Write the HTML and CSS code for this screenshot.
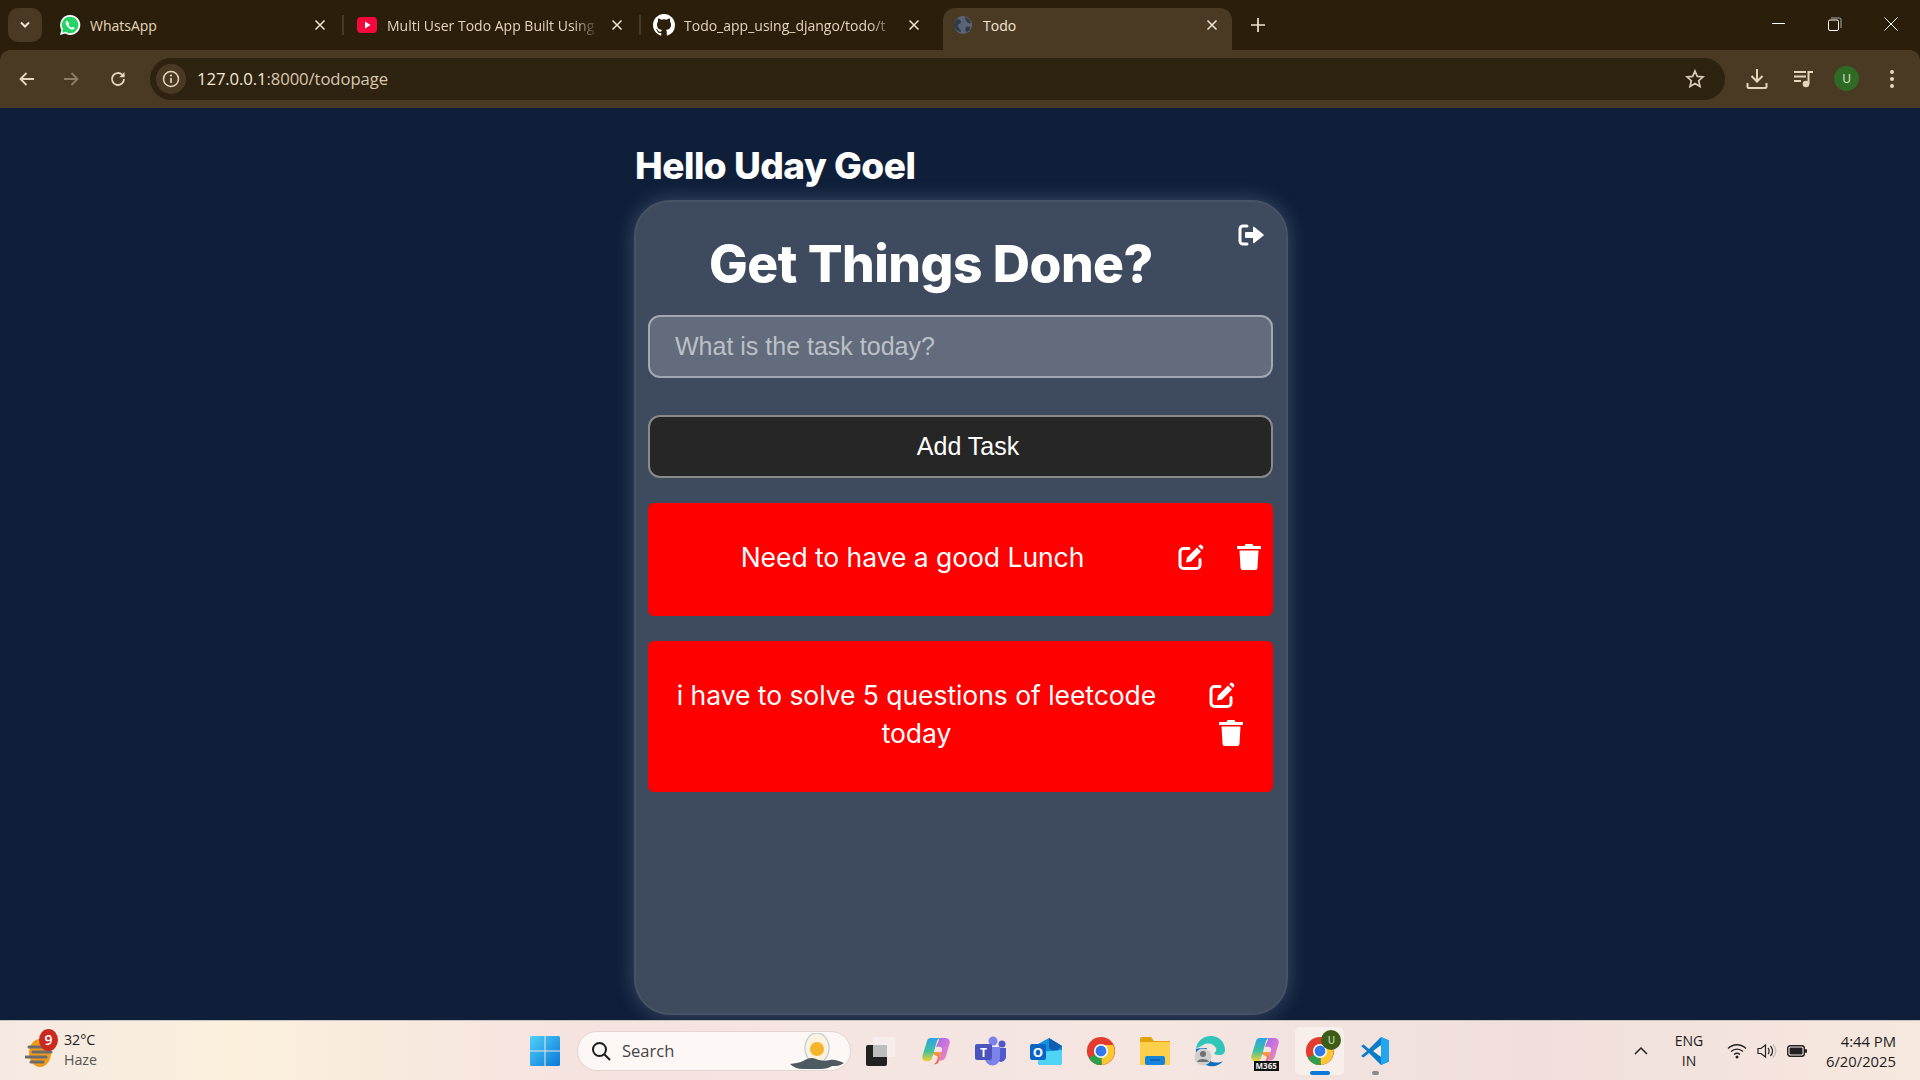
FILE: index.html
```html
<!DOCTYPE html>
<html lang="en">
<head>
  <meta charset="UTF-8">
  <meta name="viewport" content="width=device-width, initial-scale=1.0">
  <title>Todo</title>
  <link rel="stylesheet" href="styles.css">
</head>
<body>
  <svg class="defs" width="0" height="0">
    <symbol id="close" viewBox="0 0 12 12"><path d="M1.5 1.5l9 9M10.5 1.5l-9 9" stroke="currentColor" stroke-width="1.5" fill="none"/></symbol>
    <symbol id="edit" viewBox="0 0 26 26">
      <path d="M11 4.500H5.500A3.500 3.500 0 0 0 2 8v13a3.500 3.500 0 0 0 3.500 3.500h13A3.500 3.500 0 0 0 22 21v-5.500" fill="none" stroke="#fff" stroke-width="3" stroke-linecap="round"/>
      <path d="M9 13.500L19 3.500l4 4L13 17.500l-5 1z" fill="#fff"/>
      <path d="M20.300 2.200l1-1a1.800 1.800 0 0 1 2.500 0l1 1a1.800 1.800 0 0 1 0 2.500l-1 1z" fill="#fff"/>
    </symbol>
    <symbol id="trash" viewBox="0 0 24 26">
      <path d="M8.500 0h7l1 2H23a1 1 0 0 1 0 3H1a1 1 0 0 1 0-3h6.500z" fill="#fff"/>
      <path d="M2.500 6.500h19l-1 17a2.500 2.500 0 0 1-2.500 2.500H6a2.500 2.500 0 0 1-2.500-2.500z" fill="#fff"/>
    </symbol>
    <symbol id="chrome" viewBox="0 0 32 32">
      <circle cx="16" cy="16" r="15" fill="#e33b2e"/>
      <path d="M16 16l-13 7.500A15 15 0 0 0 17 31z" fill="#2f9e4c"/>
      <path d="M16 9.500h13A15 15 0 0 1 17 31z" fill="#fbc82e"/>
      <circle cx="16" cy="16" r="7.500" fill="#fff"/>
      <circle cx="16" cy="16" r="5.800" fill="#2f79e8"/>
    </symbol>
    <symbol id="copilot" viewBox="0 0 32 32">
      <defs>
        <linearGradient id="cpA" x1="0" y1="0" x2="0" y2="1"><stop offset="0" stop-color="#2aa5e8"/><stop offset=".55" stop-color="#3fc0a0"/><stop offset="1" stop-color="#f4d030"/></linearGradient>
        <linearGradient id="cpB" x1="0" y1="0" x2="1" y2="1"><stop offset="0" stop-color="#9a6ce8"/><stop offset=".6" stop-color="#d878d8"/><stop offset="1" stop-color="#f0a070"/></linearGradient>
        <linearGradient id="cpC" x1="0" y1="0" x2="0" y2="1"><stop offset="0" stop-color="#f8a040"/><stop offset="1" stop-color="#f0503c"/></linearGradient>
      </defs>
      <path d="M9 17l13 0-3 10c-.6 2-2 3-4 3H12c3 0 4.500-2 5-4l1-4z" fill="url(#cpC)"/>
      <path d="M20 2h6c3.500 0 5.500 3 4.500 6l-4 14c-.8 2.500-2.500 4-5 4h-6c3 0 4.500-2 5-4l2-7c.6-2-1-3.500-3-3.500h-3.500l3-7C19 3 19.500 2 20 2z" fill="url(#cpB)"/>
      <path d="M10 2h11c-2 0-3.500 1.500-4 3.500L12 23c-.6 2-2 4-4.500 4H6c-3.500 0-5.500-3-4.500-6l5-16C7 3 8.500 2 10 2z" fill="url(#cpA)"/>
    </symbol>
  </svg>

  <header class="browser">
    <div class="tabstrip">
      <button class="tab-search">
        <svg width="12" height="8" viewBox="0 0 12 8"><path d="M2 1.500l4 4 4-4" fill="none" stroke="#f0e4d0" stroke-width="2"/></svg>
      </button>
      <div class="tab">
        <svg class="favicon" viewBox="0 0 22 22"><path d="M11 1a10 10 0 0 0-8.600 15L1 21l5.200-1.400A10 10 0 1 0 11 1z" fill="#fff"/><path d="M11 2.800a8.200 8.200 0 0 0-7 12.500l-.9 3.400 3.500-.9A8.200 8.200 0 1 0 11 2.800z" fill="#25d366"/><path d="M8 6.500c-.8.500-1.500 1.500-1.200 3 .5 2.500 3.500 5.500 6 6 1.500.3 2.500-.4 3-1.200l-2.300-1.500-1 .9c-1-.4-2.500-1.800-3-3l.9-1z" fill="#fff"/></svg>
        <span class="tab-title">WhatsApp</span>
        <svg class="tab-close"><use href="#close"/></svg>
      </div>
      <div class="tab-sep"></div>
      <div class="tab">
        <svg class="favicon" viewBox="0 0 22 22"><rect x="1" y="3" width="20" height="16" rx="4" fill="#f5083b"/><path d="M9 7.500l5.500 3.500L9 14.500z" fill="#fff"/></svg>
        <span class="tab-title fade">Multi User Todo App Built Using</span>
        <svg class="tab-close"><use href="#close"/></svg>
      </div>
      <div class="tab-sep"></div>
      <div class="tab">
        <svg class="favicon" viewBox="0 0 16 16"><path fill="#fff" d="M8 0C3.580 0 0 3.580 0 8c0 3.540 2.290 6.530 5.470 7.590.4.070.55-.17.55-.38v-1.340c-2.230.48-2.700-1.070-2.700-1.070-.36-.92-.89-1.170-.89-1.170-.73-.5.050-.49.050-.49.800.060 1.230.82 1.230.82.720 1.220 1.870.870 2.330.66.070-.52.280-.87.510-1.070-1.780-.2-3.640-.89-3.640-3.950 0-.87.310-1.590.82-2.150-.080-.2-.36-1.020.08-2.120 0 0 .67-.21 2.200.82a7.600 7.600 0 0 1 4 0c1.530-1.040 2.200-.82 2.200-.82.44 1.100.16 1.920.08 2.120.51.560.82 1.270.82 2.150 0 3.070-1.870 3.750-3.650 3.950.29.25.54.73.54 1.480v2.200c0 .21.150.46.550.38A8 8 0 0 0 16 8c0-4.420-3.580-8-8-8z"/></svg>
        <span class="tab-title fade">Todo_app_using_django/todo/t</span>
        <svg class="tab-close"><use href="#close"/></svg>
      </div>
      <div class="tab active">
        <svg class="favicon" viewBox="0 0 22 22"><circle cx="11" cy="11" r="9" fill="#5b6474"/><path d="M5 5c2 0 4 1 4 3s-3 1-3 4 3 2 3 6c-4-.5-7-4-7-7 0-2 1-4 3-6zM13 3c2 .5 5 2.500 6 6-1.500 1-3 0-4-1s-2-3-2-5zM14 13c2-1 3.500-.5 4.500.5-.5 2-2 4-4 5-1-2-1.500-4-.5-5.500z" fill="#2f3a4a"/></svg>
        <span class="tab-title">Todo</span>
        <svg class="tab-close"><use href="#close"/></svg>
      </div>
      <svg class="new-tab" width="14" height="14" viewBox="0 0 14 14"><path d="M7 0v14M0 7h14" stroke="#f0e4d0" stroke-width="1.700"/></svg>
      <div class="window-btns">
        <svg width="14" height="14" viewBox="0 0 14 14"><path d="M0 6.500h13" stroke="#fff" stroke-width="1"/></svg>
        <svg width="14" height="14" viewBox="0 0 14 14"><rect x=".5" y="3" width="10" height="10.500" rx="1.500" fill="none" stroke="#fff"/><path d="M3 1h8.500A1.500 1.500 0 0 1 13 2.500V11" fill="none" stroke="#aaa"/></svg>
        <svg width="14" height="14" viewBox="0 0 14 14"><path d="M.5.500l13 13M13.500.500l-13 13" stroke="#fff" stroke-width="1"/></svg>
      </div>
    </div>
    <div class="toolbar">
      <svg class="nav-icon" viewBox="0 0 18 18"><path d="M16 9H3M8.500 3L2.500 9l6 6" fill="none" stroke="#e6d6bc" stroke-width="1.800"/></svg>
      <svg class="nav-icon dim" viewBox="0 0 18 18"><path d="M2 9h13M9.500 3l6 6-6 6" fill="none" stroke="#8d7d64" stroke-width="1.800"/></svg>
      <svg class="nav-icon" viewBox="0 0 18 18"><path d="M15 9a6 6 0 1 1-1.800-4.300L15 6.500" fill="none" stroke="#e6d6bc" stroke-width="1.800"/><path d="M15.500 2v5.200h-5.200z" fill="#e6d6bc"/></svg>
      <div class="address">
        <span class="info-chip">
          <svg width="18" height="18" viewBox="0 0 18 18"><circle cx="9" cy="9" r="7.500" fill="none" stroke="#e6d6bc" stroke-width="1.500"/><path d="M9 8v5" stroke="#e6d6bc" stroke-width="1.700"/><circle cx="9" cy="5.500" r="1.100" fill="#e6d6bc"/></svg>
        </span>
        <span class="url"><b>127.0.0.1</b>:8000/todopage</span>
        <svg class="star" width="20" height="20" viewBox="0 0 20 20"><path d="M10 2l2.300 5.400 5.700.5-4.300 3.800 1.300 5.700L10 14.400l-5 3 1.300-5.700L2 7.900l5.700-.5z" fill="none" stroke="#d8ccb8" stroke-width="1.700"/></svg>
      </div>
      <div class="toolbar-right">
        <svg width="22" height="22" viewBox="0 0 22 22"><path d="M11 1v12M5.500 8l5.500 5.500L16.500 8" fill="none" stroke="#e6d6bc" stroke-width="2"/><path d="M1.500 15v3.500a1.500 1.500 0 0 0 1.500 1.500h16a1.500 1.500 0 0 0 1.500-1.500V15" fill="none" stroke="#e6d6bc" stroke-width="2"/></svg>
        <svg class="media-icon" width="22" height="22" viewBox="0 0 22 22"><path d="M2 4h12M2 8.500h12M2 13h7" stroke="#e6d6bc" stroke-width="2"/><circle cx="14" cy="16" r="3.300" fill="#e6d6bc"/><path d="M16.500 16V4H21" fill="none" stroke="#e6d6bc" stroke-width="2"/></svg>
        <span class="avatar">U</span>
        <svg width="6" height="20" viewBox="0 0 6 20"><circle cx="3" cy="3" r="2" fill="#e6d6bc"/><circle cx="3" cy="10" r="2" fill="#e6d6bc"/><circle cx="3" cy="17" r="2" fill="#e6d6bc"/></svg>
      </div>
    </div>
  </header>

  <main class="page">
    <h1 class="hello">Hello Uday Goel</h1>
    <section class="todo-card">
      <div class="card-head">
        <h2 class="card-title">Get Things Done?</h2>
        <svg class="logout" viewBox="0 0 26 22">
          <path d="M9 2H5a3 3 0 0 0-3 3v12a3 3 0 0 0 3 3h4" fill="none" stroke="#fff" stroke-width="3" stroke-linecap="round"/>
          <path d="M8 8h7V3.500a.8.800 0 0 1 1.300-.6l9 7.300a1 1 0 0 1 0 1.600l-9 7.300a.8.800 0 0 1-1.300-.6V14H8a1 1 0 0 1-1-1V9a1 1 0 0 1 1-1z" fill="#fff"/>
        </svg>
      </div>
      <form class="task-form">
        <input class="task-input" type="text" placeholder="What is the task today?">
        <button class="add-btn" type="button">Add Task</button>
      </form>
      <div class="task-item">
        <p class="task-text">Need to have a good Lunch</p>
        <div class="task-actions">
          <svg class="act-icon"><use href="#edit"/></svg>
          <svg class="act-icon trash"><use href="#trash"/></svg>
        </div>
      </div>
      <div class="task-item long">
        <p class="task-text">i have to solve 5 questions of leetcode today</p>
        <div class="task-actions stacked">
          <svg class="act-icon"><use href="#edit"/></svg>
          <svg class="act-icon trash"><use href="#trash"/></svg>
        </div>
      </div>
    </section>
  </main>

  <footer class="taskbar">
    <div class="weather">
      <span class="weather-icon">
        <svg width="30" height="38" viewBox="0 0 30 38"><ellipse cx="15" cy="21" rx="11" ry="14" fill="#f09a1a"/><path d="M4 15h16M8 20h18M1 25h20M6 30h12" stroke="#6c6c6c" stroke-width="3" stroke-linecap="round"/></svg>
        <span class="badge">9</span>
      </span>
      <div class="weather-text"><span>32°C</span><span class="haze">Haze</span></div>
    </div>

    <div class="task-center">
      <svg class="win-logo" width="30" height="30" viewBox="0 0 30 30">
        <defs><linearGradient id="win" x1="0" y1="0" x2="1" y2="1"><stop offset="0" stop-color="#4fd0fb"/><stop offset="1" stop-color="#0a78d8"/></linearGradient></defs>
        <path d="M0 1.500A1.500 1.500 0 0 1 1.500 0h13v14.500H0zM15.500 0h13A1.500 1.500 0 0 1 30 1.500v13H15.500zM0 15.500h14.500V30h-13A1.500 1.500 0 0 1 0 28.500zM15.500 15.500H30v13a1.500 1.500 0 0 1-1.500 1.500h-13z" fill="url(#win)"/>
      </svg>
      <div class="search-pill">
        <svg width="20" height="20" viewBox="0 0 20 20"><circle cx="8.500" cy="8.500" r="6.500" fill="none" stroke="#1c1c1c" stroke-width="2"/><path d="M13 13l6 6" stroke="#1c1c1c" stroke-width="2"/></svg>
        <span class="search-label">Search</span>
        <svg class="search-art" width="56" height="36" viewBox="0 0 56 36"><ellipse cx="28" cy="15" rx="12" ry="15" fill="#fdf2df" stroke="#c4d2da" stroke-width="1.500"/><circle cx="28" cy="16" r="7" fill="#f5b52a"/><path d="M1 31c5-1 9-1 13-3 5-3 9-4 13-2 5 2 9 2 14 1 4-1 9 1 14 3-4 3-8 3-12 3 -3 2-7 3-11 3H14c-5 0-10-2-13-5z" fill="#4d5a60"/></svg>
      </div>
      <div class="app-icons">
        <span class="app">
          <svg width="30" height="30" viewBox="0 0 30 30"><rect x="0" y="9" width="21" height="21" rx="2" fill="#222"/><rect x="7" y="1" width="22" height="20" rx="2" fill="#f4f0ee" fill-opacity=".85"/><rect x="7" y="9" width="14" height="12" fill="#bdbdbd"/></svg>
        </span>
        <span class="app"><svg width="30" height="30"><use href="#copilot"/></svg></span>
        <span class="app">
          <svg width="32" height="30" viewBox="0 0 32 30"><circle cx="18" cy="5" r="4.500" fill="#7b83eb"/><circle cx="27" cy="8" r="3.500" fill="#5059c9"/><path d="M21 12h10v9a5 5 0 0 1-7 4.500z" fill="#5059c9"/><path d="M10 11h15v11a7.500 7.500 0 0 1-15 0z" fill="#7b83eb"/><rect x="0" y="8" width="17" height="16" rx="2" fill="#4b53bc"/><text class="icon-letter" x="8.500" y="20.500" text-anchor="middle" font-size="12">T</text></svg>
        </span>
        <span class="app">
          <svg width="32" height="30" viewBox="0 0 32 30"><path d="M8 8l11-6 13 8v16a3 3 0 0 1-3 3H11a3 3 0 0 1-3-3z" fill="#1490df"/><path d="M19 2l13 8-7 7-6-5z" fill="#0f5fb0"/><path d="M8 16l24-2v12a3 3 0 0 1-3 3H11a3 3 0 0 1-3-3z" fill="#4fd3f7"/><rect x="0" y="8" width="16" height="16" rx="2" fill="#0a64c4"/><text class="icon-letter" x="8" y="20.500" text-anchor="middle" font-size="13">O</text></svg>
        </span>
        <span class="app"><svg width="30" height="30"><use href="#chrome"/></svg></span>
        <span class="app">
          <svg width="30" height="28" viewBox="0 0 30 28"><path d="M0 2a2 2 0 0 1 2-2h9l3 4h16v4H0z" fill="#e0a30a"/><rect x="0" y="5" width="30" height="23" rx="1" fill="#fdcf4a"/><rect x="5" y="19" width="20" height="9" rx="2" fill="#1685d9"/><path d="M10 23h10" stroke="#0a5ea8" stroke-width="1.500"/></svg>
        </span>
        <span class="app">
          <svg width="32" height="32" viewBox="0 0 32 32"><path d="M2 14C3 5 10 1 17 1c8 0 14 6 14 14 0 3-2 5-6 5-3 0-5-1-5-2 2-1 3-3 2-5-2-4-8-6-13-3-3 2-5 2-7 4z" fill="#2fc5b8"/><path d="M2 14c-1 8 4 15 13 17 6 1 11-1 14-5-4 2-9 2-13 0-5-3-6-9-3-13-4 0-9 0-11 1z" fill="#0c6fc0"/><circle cx="9" cy="22" r="8.500" fill="#cfcfcf"/><circle cx="9" cy="19" r="3" fill="#707070"/><path d="M3 27c1-4 11-4 12 0z" fill="#707070"/></svg>
        </span>
        <span class="app m365">
          <svg width="30" height="30"><use href="#copilot"/></svg>
          <span class="m365-tag">M365</span>
        </span>
        <span class="app running">
          <svg width="30" height="30"><use href="#chrome"/></svg>
          <span class="profile-dot">U</span>
          <span class="run-bar"></span>
        </span>
        <span class="app code">
          <svg width="30" height="30" viewBox="0 0 30 30"><path d="M21 1L9 13 3.500 8.500 1 10l6 5-6 5 2.500 1.500L9 17l12 12 8-3.500V4.500z" fill="#0a7cc9"/><path d="M21 1l8 3.500v21L21 29z" fill="#23a6ee"/><path d="M21 9v12l-8-6z" fill="#f4ece6"/></svg>
          <span class="idle-dot"></span>
        </span>
      </div>
    </div>

    <div class="tray">
      <svg width="14" height="9" viewBox="0 0 14 9"><path d="M1 8l6-6 6 6" fill="none" stroke="#222" stroke-width="1.500"/></svg>
      <div class="lang"><span>ENG</span><span>IN</span></div>
      <div class="tray-icons">
        <svg width="20" height="16" viewBox="0 0 20 16"><path d="M1 5.500c5-5 13-5 18 0M4 8.500c3.500-3.200 8.500-3.200 12 0M7 11.500c1.800-1.500 4.200-1.500 6 0" fill="none" stroke="#222" stroke-width="1.300"/><circle cx="10" cy="14" r="1.500" fill="#222"/></svg>
        <svg width="20" height="16" viewBox="0 0 20 16"><path d="M1 5.500h3L8.500 2v12L4 10.500H1z" fill="none" stroke="#222" stroke-width="1.200"/><path d="M11 5c1.500 1.500 1.500 4.500 0 6M13.500 3c2.500 3 2.500 7 0 10" fill="none" stroke="#222" stroke-width="1.200"/><path d="M16 1.500c3.500 4 3.500 9 0 13" fill="none" stroke="#bbb" stroke-width="1.200"/></svg>
        <svg width="20" height="12" viewBox="0 0 20 12"><rect x=".7" y=".7" width="16.600" height="10.600" rx="2.500" fill="none" stroke="#222" stroke-width="1.400"/><rect x="2.500" y="2.500" width="13" height="7" rx="1" fill="#222"/><rect x="18" y="4" width="2" height="4" rx="1" fill="#222"/></svg>
      </div>
      <div class="clock"><span>4:44 PM</span><span>6/20/2025</span></div>
    </div>
  </footer>
</body>
</html>
```

FILE: styles.css
```css
* { box-sizing: border-box; }
html, body { margin: 0; height: 100%; }
body {
  width: 1920px;
  height: 1080px;
  overflow: hidden;
  display: flex;
  flex-direction: column;
  background-color: #0f1f3a;
  font-family: "Open Sans", sans-serif;
}
.defs { position: absolute; }

/* browser top */
.browser { height: 108px; flex: none; background-color: #2b1e0b; }
.tabstrip { height: 50px; display: flex; align-items: flex-start; padding: 8px 0 0 8px; }
.tab-search {
  width: 34px;
  height: 34px;
  margin-right: 9px;
  border: 0;
  border-radius: 10px;
  background-color: #4a3a24;
  display: flex;
  align-items: center;
  justify-content: center;
}
.tab {
  width: 291px;
  height: 34px;
  display: flex;
  align-items: center;
  padding: 0 16px 0 8px;
  color: #e6d6bc;
  font-size: 14px;
}
.tab.active {
  width: 289px;
  height: 42px;
  margin-left: 7px;
  padding: 0 14px 8px 9px;
  background-color: #4a3a24;
  border-radius: 12px 12px 0 0;
  color: #f3e8d6;
}
.favicon { width: 22px; height: 22px; flex: none; }
.tab-title { flex: 1; min-width: 0; margin-left: 9px; white-space: nowrap; }
.tab-title.fade { -webkit-mask-image: linear-gradient(to right, #000 88%, transparent 100%); mask-image: linear-gradient(to right, #000 88%, transparent 100%); }
.tab-close { width: 12px; height: 12px; flex: none; margin-left: 12px; color: #f3e8d6; }
.tab-sep { width: 2px; height: 20px; margin: 7px 4px 0 0; background-color: #4a3a24; }
.new-tab { margin: 10px 0 0 19px; }
.window-btns { margin-left: auto; margin-right: 22px; margin-top: 9px; display: flex; gap: 42px; }
.toolbar {
  height: 58px;
  background-color: #4a3a24;
  border-radius: 10px 10px 0 0;
  display: flex;
  align-items: center;
  padding: 0 18px 1px 18px;
}
.nav-icon { width: 18px; height: 18px; margin-right: 26px; flex: none; }
.nav-icon.dim { margin-right: 29px; }
.address {
  width: 1575px;
  height: 42px;
  margin-left: -3px;
  background-color: #2e2210;
  border-radius: 21px;
  display: flex;
  align-items: center;
  padding: 0 20px 0 6px;
  color: #d8c8ae;
  font-size: 16.700px;
  letter-spacing: -.1px;
}
.info-chip {
  width: 30px;
  height: 30px;
  border-radius: 50%;
  background-color: #4a3a24;
  display: flex;
  align-items: center;
  justify-content: center;
}
.url { margin-left: 11px; }
.url b { font-weight: 400; color: #f3e8d6; }
.star { margin-left: auto; }
.toolbar-right { flex: none; display: flex; align-items: center; padding-left: 21px; }
.media-icon { margin: 0 20px 0 24px; }
.avatar {
  width: 25px;
  height: 25px;
  margin-right: 30px;
  border-radius: 50%;
  background-color: #2f6b25;
  color: #dfe8d8;
  font-size: 12px;
  display: flex;
  align-items: center;
  justify-content: center;
}

/* page */
.page { height: 912px; flex: none; padding: 0 0 0 634px; overflow: hidden; }
.hello {
  margin: 36px 0 0 1px;
  height: 56px;
  color: #fff;
  font-family: Inter, sans-serif;
  font-size: 37px;
  line-height: 43px;
  font-weight: 800;
  letter-spacing: -.5px;
}
.todo-card {
  width: 654px;
  height: 815px;
  padding: 0 12px;
  background-color: #3e4a5d;
  border: 2px solid #465266;
  border-radius: 36px;
  box-shadow: 0 0 20px rgba(200, 215, 235, .25);
}
.card-head { height: 113px; display: flex; padding-top: 16px; }
.card-title {
  width: 566px;
  margin: 15px 0 0;
  text-align: center;
  color: #fff;
  font-family: Inter, sans-serif;
  font-size: 51.500px;
  line-height: 60px;
  font-weight: 800;
  letter-spacing: -.5px;
}
.logout { width: 26px; height: 22px; margin: 6px 0 0 24px; flex: none; }
.task-form { display: flex; flex-direction: column; gap: 37px; }
.task-input, .add-btn {
  width: 625px;
  height: 63px;
  border-radius: 12px;
  font-family: "Liberation Sans", Arial, sans-serif;
  font-size: 25px;
}
.task-input {
  padding: 0 25px;
  border: 2px solid #a3a8b0;
  background-color: #636c7c;
  color: #fff;
  outline: none;
}
.task-input::placeholder { color: #bcc0c6; opacity: 1; }
.add-btn {
  border: 2px solid #8a8a8a;
  background-color: #262626;
  color: #fff;
  padding-left: 21px;
}
.task-item {
  width: 625px;
  height: 113px;
  margin-top: 25px;
  display: flex;
  align-items: center;
  padding: 0 12px 0 24px;
  background-color: #ff0000;
  border-radius: 6px;
}
.task-item.long { height: 151px; padding-right: 22px; }
.task-text {
  flex: 1;
  margin: 0 0 6px;
  padding: 0 25px 0 0;
  text-align: center;
  color: #fff;
  font-family: Inter, sans-serif;
  font-size: 26.500px;
  line-height: 38px;
  letter-spacing: -.05px;
}
.long .task-text { padding-right: 50px; }
.task-actions { display: flex; align-items: center; gap: 33px; margin-bottom: 6px; }
.task-actions.stacked { flex-direction: column; gap: 12px; width: 40px; }
.stacked .act-icon:first-child { margin-right: 18px; }
.act-icon { width: 26px; height: 26px; display: block; }
.act-icon.trash { width: 24px; }

/* windows taskbar */
.taskbar {
  height: 60px;
  flex: none;
  display: flex;
  align-items: center;
  border-top: 1px solid #c9c3c0;
  background: linear-gradient(90deg, #f5e9e2 0, #fbf0dc 12%, #f5e3e0 30%, #f5e6e2 60%, #f0dfdc 80%, #f7e8de 100%);
  color: #1c1c1c;
  font-size: 14px;
}
.weather { display: flex; align-items: center; margin-left: 25px; width: 299px; }
.weather-icon { position: relative; width: 30px; height: 38px; display: block; }
.badge {
  position: absolute;
  top: -3px;
  left: 14px;
  width: 19px;
  height: 22px;
  border-radius: 50%;
  background-color: #c92a20;
  color: #fff;
  font-size: 14px;
  font-weight: 600;
  text-align: center;
  line-height: 22px;
}
.weather-text { display: flex; flex-direction: column; margin: -2px 0 0 9px; line-height: 20px; font-size: 14.300px; letter-spacing: -.1px; }
.haze { color: #555; }
.task-center { display: flex; align-items: center; margin-left: 206px; }
.win-logo { flex: none; }
.search-pill {
  width: 274px;
  height: 40px;
  margin-left: 17px;
  display: flex;
  align-items: center;
  padding: 0 0 0 13px;
  border: 1px solid #e3d5d3;
  border-radius: 20px;
  background-color: #fdf8f6;
}
.search-label { margin-left: 11px; color: #444; font-size: 16.500px; }
.search-art { margin-left: auto; margin-right: 5px; }
.app-icons { display: flex; margin-left: 3px; }
.app {
  width: 54.800px;
  height: 48px;
  position: relative;
  display: flex;
  align-items: center;
  justify-content: center;
}
.icon-letter { fill: #fff; font-family: "Open Sans", sans-serif; font-weight: 700; }
.m365-tag {
  position: absolute;
  left: 16px;
  bottom: 4px;
  padding: 0 2px;
  background-color: #111;
  color: #eee;
  font-size: 8px;
  line-height: 10px;
  font-weight: 700;
}
.app.running { background-color: #f8eeea; border-radius: 5px; width: 49px; margin: 0 3px; }
.profile-dot {
  position: absolute;
  top: 3px;
  right: 3px;
  width: 20px;
  height: 20px;
  border-radius: 50%;
  background-color: #3c5d18;
  color: #b9d29a;
  font-size: 10px;
  font-weight: 600;
  text-align: center;
  line-height: 20px;
}
.run-bar { position: absolute; bottom: 0; left: 15px; width: 20px; height: 4px; border-radius: 2px; background-color: #0a78d8; }
.idle-dot { position: absolute; bottom: 0; left: 25px; width: 7px; height: 4px; border-radius: 2px; background-color: #8a8a8a; }
.tray { margin-left: auto; margin-right: 24px; display: flex; align-items: center; }
.lang { width: 40px; margin-left: 21px; display: flex; flex-direction: column; align-items: center; line-height: 20px; font-size: 14px; }
.tray-icons { display: flex; align-items: center; gap: 10px; margin-left: 18px; }
.clock { width: 90px; margin-left: -1px; display: flex; flex-direction: column; align-items: flex-end; line-height: 20px; font-size: 14.800px; }
```
